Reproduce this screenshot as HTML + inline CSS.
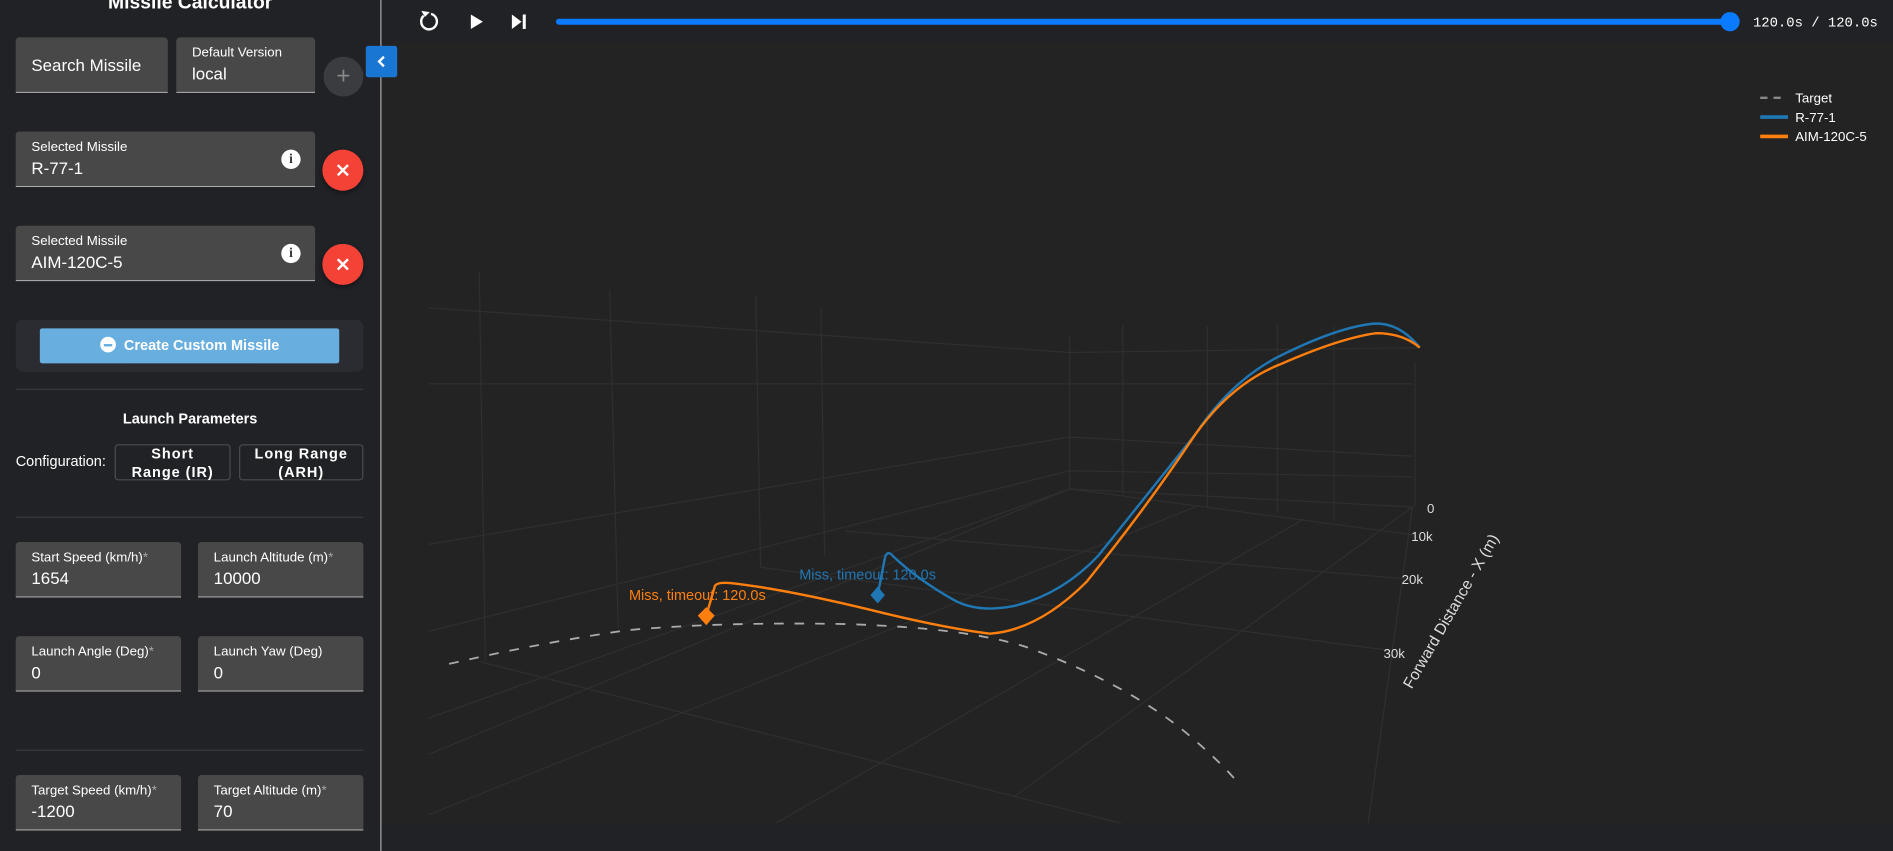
<!DOCTYPE html>
<html><head><meta charset="utf-8"><style>
html,body{margin:0;padding:0;width:1893px;height:851px;overflow:hidden;background:#212226;font-family:"Liberation Sans",sans-serif;color:#fff}
#s{position:absolute;left:0;top:0;width:1568px;height:705px;transform:scale(1.20727,1.2071);transform-origin:0 0}
.a{position:absolute}
.f{position:absolute;background:#484848;border-bottom:1px solid #aaa;border-radius:3px 3px 0 0;box-sizing:border-box}
.f .l{position:absolute;left:13px;top:7px;font-size:11px;color:#fff}
.f .v{position:absolute;left:13px;top:22px;font-size:14px;color:#fff}
.f .l i{font-style:normal;color:#aaa}
.x{position:absolute;width:34px;height:34px;border-radius:50%;background:#f44336;box-shadow:0 2px 4px rgba(0,0,0,.4)}
.x:before,.x:after{content:"";position:absolute;left:11px;top:16px;width:12px;height:2px;background:#fff;transform:rotate(45deg)}
.x:after{transform:rotate(-45deg)}
.info{position:absolute;width:16px;height:16px;border-radius:50%;background:#fff;color:#333;font-size:11px;font-weight:bold;text-align:center;line-height:16px;font-family:"Liberation Serif",serif}
.dv{position:absolute;left:13px;width:288px;height:1px;background:#3a3c40}
.cb{position:absolute;top:368px;height:30px;border:1px solid #4a4c52;border-radius:3px;box-sizing:border-box;font-size:12px;font-weight:bold;text-align:center;line-height:15px;letter-spacing:.8px;padding-top:0}
</style></head><body><div id="s">
<div class="a" style="left:316px;top:35px;width:1252px;height:647px;background:#232323"></div>
<div class="a" style="left:315px;top:0;width:1px;height:705px;background:#aaa"></div>
<div class="a" style="left:0;top:-6px;width:315px;text-align:center;font-size:16px;font-weight:bold">Missile Calculator</div>
<div class="f" style="left:13px;top:31px;width:126px;height:46px"><div class="v" style="top:15px">Search Missile</div></div>
<div class="f" style="left:146px;top:31px;width:115px;height:46px"><div class="l">Default Version</div><div class="v">local</div></div>
<div class="a" style="left:268px;top:47px;width:33px;height:33px;border-radius:50%;background:#3a3c40;color:#888;font-size:20px;text-align:center;line-height:33px">+</div>
<div class="a" style="left:303px;top:38px;width:26px;height:26px;background:#1976d2;border-radius:2px"><svg width="26" height="26"><path d="M15 9 L11 13 L15 17" stroke="#fff" stroke-width="2" fill="none"/></svg></div>
<div class="f" style="left:13px;top:109px;width:248px;height:46px"><div class="l">Selected Missile</div><div class="v">R-77-1</div><div class="info" style="left:220px;top:15px">i</div></div>
<div class="x" style="left:267px;top:124px"></div>
<div class="f" style="left:13px;top:187px;width:248px;height:46px"><div class="l">Selected Missile</div><div class="v">AIM-120C-5</div><div class="info" style="left:220px;top:15px">i</div></div>
<div class="x" style="left:267px;top:202px"></div>
<div class="a" style="left:13px;top:265px;width:288px;height:43px;background:#2a2c31;border-radius:6px"></div>
<div class="a" style="left:33px;top:272px;width:248px;height:29px;background:#68aedf;border-radius:2px;font-size:12px;font-weight:bold;text-align:center;line-height:29px"><span style="display:inline-block;width:13px;height:13px;border-radius:50%;background:#fff;vertical-align:-2px;margin-right:7px;position:relative"><span style="position:absolute;left:3px;top:6px;width:7px;height:1.5px;background:#68aedf"></span></span>Create Custom Missile</div>
<div class="dv" style="top:322px"></div>
<div class="a" style="left:0;top:340px;width:315px;text-align:center;font-size:12px;font-weight:bold">Launch Parameters</div>
<div class="a" style="left:13px;top:375px;font-size:12px">Configuration:</div>
<div class="cb" style="left:95px;width:96px">Short<br>Range (IR)</div>
<div class="cb" style="left:198px;width:103px">Long Range<br>(ARH)</div>
<div class="dv" style="top:428px"></div>
<div class="f" style="left:13px;top:449px;width:137px;height:46px"><div class="l">Start Speed (km/h)<i>*</i></div><div class="v">1654</div></div>
<div class="f" style="left:164px;top:449px;width:137px;height:46px"><div class="l">Launch Altitude (m)<i>*</i></div><div class="v">10000</div></div>
<div class="f" style="left:13px;top:527px;width:137px;height:46px"><div class="l">Launch Angle (Deg)<i>*</i></div><div class="v">0</div></div>
<div class="f" style="left:164px;top:527px;width:137px;height:46px"><div class="l">Launch Yaw (Deg)</div><div class="v">0</div></div>
<div class="dv" style="top:621px"></div>
<div class="f" style="left:13px;top:642px;width:137px;height:46px"><div class="l">Target Speed (km/h)<i>*</i></div><div class="v">-1200</div></div>
<div class="f" style="left:164px;top:642px;width:137px;height:46px"><div class="l">Target Altitude (m)<i>*</i></div><div class="v">70</div></div>
<svg class="a" style="left:0;top:0" width="1568" height="705">
<defs><clipPath id="c"><rect x="316" y="35" width="1252" height="647"/></clipPath></defs>
<path d="M351 13 A6.5 6.5 0 1 0 357 11.5" stroke="#fff" stroke-width="2" fill="none"/>
<path d="M349 9 L352 14 L356 10Z" fill="#fff"/>
<path d="M390 12 L400 18 L390 24Z" fill="#fff"/>
<path d="M424 12 L432 18 L424 24Z" fill="#fff"/><rect x="433" y="12" width="2.5" height="12" fill="#fff"/>
<line x1="463" y1="18" x2="1433" y2="18" stroke="#0a7aff" stroke-width="5" stroke-linecap="round"/>
<circle cx="1433" cy="18" r="8" fill="#0a7aff"/>
<text x="1452" y="22" font-family="Liberation Mono,monospace" font-size="11.5" fill="#fff">120.0s / 120.0s</text>
<line x1="1458" y1="81" x2="1480" y2="81" stroke="#888" stroke-width="2" stroke-dasharray="6,5"/>
<text x="1487" y="85" font-size="11" fill="#fff">Target</text>
<line x1="1458" y1="97" x2="1481" y2="97" stroke="#1f77b4" stroke-width="3"/>
<text x="1487" y="101" font-size="11" fill="#fff">R-77-1</text>
<line x1="1458" y1="113" x2="1481" y2="113" stroke="#ff7f0e" stroke-width="3"/>
<text x="1487" y="117" font-size="11" fill="#fff">AIM-120C-5</text>
<g stroke="#2f2f2f" stroke-width="1" fill="none" clip-path="url(#c)">
<path d="M397 225 L402 548"/><path d="M505 240 L512 520"/><path d="M626 245 L630 470"/><path d="M680 255 L683 460"/>
<path d="M886 278 L886 405"/><path d="M930 270 L930 410"/><path d="M1000 270 L1000 420"/><path d="M1058 268 L1058 425"/><path d="M1105 270 L1105 430"/><path d="M1172 300 L1172 420"/>
<path d="M355 255 L886 292 L1176 288"/><path d="M355 318 L1170 318"/>
<path d="M355 451 L886 362 L1170 378"/><path d="M355 523 L886 390 L1170 395"/><path d="M355 595 L886 405 L1170 420"/>
<path d="M355 625 L886 405"/><path d="M355 675 L990 420"/><path d="M620 695 L1080 430"/><path d="M840 660 L1170 420"/>
<path d="M397 548 L1020 705"/><path d="M630 470 L1160 540"/><path d="M700 440 L1170 480"/><path d="M886 405 L1170 443"/>
<path d="M1170 420 L1130 705"/>
</g>
<g fill="#ddd" font-size="11">
<text x="1182" y="425">0</text><text x="1169" y="448">10k</text><text x="1161" y="484">20k</text><text x="1146" y="545">30k</text>
<text x="1203" y="510" font-size="13" text-anchor="middle" transform="rotate(-60 1203 507)">Forward Distance - X (m)</text>
</g>
<path d="M372 550 Q450 532 520 522 Q600 515 700 517 Q800 520 850 536 Q930 565 980 605 Q1010 630 1025 648" stroke="#aaa" stroke-width="1.5" fill="none" stroke-dasharray="8,9"/>
<path d="M733 462 Q735 455 740 461 Q760 480 790 497 Q810 508 840 502 Q880 492 910 460 Q950 410 990 360 Q1020 315 1060 295 Q1110 270 1140 268 Q1160 268 1176 288" stroke="#1f77b4" stroke-width="2" fill="none"/>
<path d="M727 493 L733 462" stroke="#1f77b4" stroke-width="2"/>
<path d="M592 486 Q593 482 605 483 Q650 488 720 505 Q780 520 820 525 Q860 522 900 482 Q950 420 990 360 Q1020 318 1060 302 Q1110 280 1140 276 Q1162 276 1176 288" stroke="#ff7f0e" stroke-width="2" fill="none"/>
<path d="M585 510 L592 486" stroke="#ff7f0e" stroke-width="2"/>
<path d="M727 486 L733 493 L727 500 L721 493Z" fill="#1f77b4"/>
<path d="M585 503 L592 510 L585 518 L578 510Z" fill="#ff7f0e"/>
<text x="662" y="480" font-size="12" fill="#1f77b4">Miss, timeout: 120.0s</text>
<text x="521" y="497" font-size="12" fill="#ff7f0e">Miss, timeout: 120.0s</text>
</svg>
</div></body></html>
